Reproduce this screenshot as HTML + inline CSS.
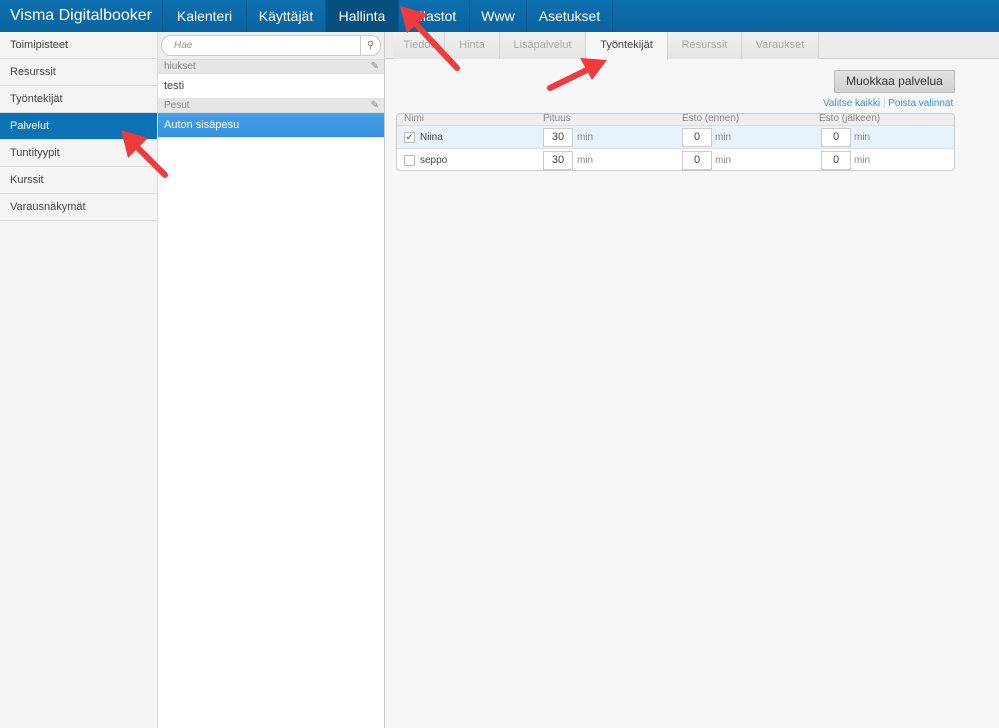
<!DOCTYPE html>
<html><head><meta charset="utf-8"><style>
*{box-sizing:border-box;margin:0;padding:0}
body{width:999px;height:728px;overflow:hidden;font-family:"Liberation Sans",sans-serif;background:#f7f7f7;position:relative;font-size:11px;color:#444}
.top{position:absolute;left:0;top:0;width:999px;height:32px;background:linear-gradient(#0d6fae,#0a64a0);color:#fff}
.top div{position:absolute;top:0;height:32px;line-height:32px;font-size:14px;border-right:1px solid #0a5a90;text-align:center;white-space:nowrap}
.top .brand{font-size:16px;text-align:left;padding-left:10px}
.top .act{background:#064f7f}
.side{position:absolute;left:0;top:32px;width:158px;height:696px;background:#f4f4f4;border-right:1px solid #ddd}
.side div{height:27px;line-height:27px;padding-left:10px;border-bottom:1px solid #ddd;color:#444;font-size:11px}
.side .sel{background:#0b72b5;color:#fff}
.mid{position:absolute;left:158px;top:32px;width:227px;height:696px;background:#fff;border-right:1px solid #ccc}
.search{height:28px;background:#eee;padding:3px;border-bottom:1px solid #ddd}
.search div{height:21px;background:#fff;border:1px solid #ccc;border-radius:10px;font-style:italic;color:#999;font-size:10px;line-height:19px;padding-left:12px;position:relative}
.grp{height:14px;line-height:14px;background:#e6e6e6;color:#888;font-size:10px;padding-left:6px;border-bottom:1px solid #ddd;position:relative}
.grp:after{content:"✎";position:absolute;right:5px;color:#888}
.item{height:25px;line-height:25px;padding-left:6px;color:#444;border-bottom:1px solid #e6e6e6}
.item.s{background:linear-gradient(#4ba0e8,#3390df);color:#fff}
.tabs{position:absolute;left:385px;top:32px;width:614px;height:27px;background:#ececec;border-bottom:1px solid #ccc}
.tabs div{position:absolute;top:0;height:27px;line-height:27px;text-align:center;color:#aaa;border-right:1px solid #d5d5d5;background:linear-gradient(#f0f0f0,#e6e6e6);white-space:nowrap}
.tabs .on{background:#f7f7f7;color:#444;height:28px}
.btn{position:absolute;left:834px;top:70px;width:121px;height:23px;background:linear-gradient(#e2e2e2,#d2d2d2);border:1px solid #bbb;border-radius:2px;text-align:center;line-height:21px;font-size:12px;color:#333}
.links{position:absolute;left:823px;top:98px;color:#3b8fd8;font-size:10px}
.tbl{position:absolute;left:396px;top:113px;width:559px;height:58px;border:1px solid #ccc;border-radius:4px;background:#fff;overflow:hidden}
.hd{height:12px;background:#eee;font-size:10px;color:#888;position:relative;border-bottom:1px solid #ddd}
.row{height:23px;position:relative;border-bottom:1px solid #ddd}
.row.a{background:#e8f2fa}
.abs{position:absolute}
.cb{position:absolute;left:7px;top:6px;width:11px;height:11px;border:1px solid #bbb;background:#fff;font-size:9px;line-height:9px;text-align:center;color:#333}
.in{position:absolute;top:2px;width:30px;height:19px;border:1px solid #ccc;background:#fff;text-align:center;line-height:17px;color:#444}
.mn{position:absolute;top:6px;color:#888;font-size:10px}
</style></head><body>
<div class="top"><div class="brand" style="left:0;width:163px">Visma Digitalbooker</div><div style="left:163px;width:84px">Kalenteri</div><div style="left:247px;width:79px">Käyttäjät</div><div class="act" style="left:326px;width:73px">Hallinta</div><div style="left:399px;width:71px">Tilastot</div><div style="left:470px;width:57px">Www</div><div style="left:527px;width:86px">Asetukset</div></div>
<div class="side"><div>Toimipisteet</div><div>Resurssit</div><div>Työntekijät</div><div class="sel">Palvelut</div><div>Tuntityypit</div><div>Kurssit</div><div>Varausnäkymät</div></div>
<div class="mid"><div class="search"><div>Hae<span style="position:absolute;right:0;top:0;width:20px;height:19px;border-left:1px solid #ccc;font-style:normal;color:#777;text-align:center">&#9906;</span></div></div>
<div class="grp">hiukset</div><div class="item">testi</div><div class="grp">Pesut</div><div class="item s">Auton sisäpesu</div></div>
<div class="tabs"><div style="left:8px;width:52px">Tiedot</div><div style="left:60px;width:55px">Hinta</div><div style="left:115px;width:86px">Lisäpalvelut</div><div class="on" style="left:201px;width:82px">Työntekijät</div><div style="left:283px;width:74px">Resurssit</div><div style="left:357px;width:77px">Varaukset</div></div>
<div class="btn">Muokkaa palvelua</div>
<div class="links">Valitse kaikki <span style="color:#ccc">|</span> Poista valinnat</div>
<div class="tbl">
<div class="hd"><span class="abs" style="left:7px;top:-1px">Nimi</span><span class="abs" style="left:146px;top:-1px">Pituus</span><span class="abs" style="left:285px;top:-1px">Esto (ennen)</span><span class="abs" style="left:422px;top:-1px">Esto (jälkeen)</span></div>
<div class="row a"><div class="cb">✓</div><span class="abs" style="left:23px;top:6px;font-size:10px">Niina</span>
<div class="in" style="left:146px">30</div><span class="mn" style="left:180px">min</span>
<div class="in" style="left:285px">0</div><span class="mn" style="left:318px">min</span>
<div class="in" style="left:424px">0</div><span class="mn" style="left:457px">min</span></div>
<div class="row" style="border:0"><div class="cb"></div><span class="abs" style="left:23px;top:6px;font-size:10px">seppo</span>
<div class="in" style="left:146px">30</div><span class="mn" style="left:180px">min</span>
<div class="in" style="left:285px">0</div><span class="mn" style="left:318px">min</span>
<div class="in" style="left:424px">0</div><span class="mn" style="left:457px">min</span></div>
</div>
<svg width="999" height="728" style="position:absolute;left:0;top:0" fill="#ef3b3b">
<g stroke="#ef3b3b" stroke-width="6" stroke-linecap="round"><line x1="457" y1="68" x2="412" y2="20"/><line x1="550" y1="88" x2="595" y2="66"/><line x1="165" y1="175" x2="133" y2="143"/></g>
<polygon points="400,6 428,14 407,33"/><polygon points="607,60 580,58 592,80"/><polygon points="121,130 148,138 128,158"/>
</svg>
</body></html>
